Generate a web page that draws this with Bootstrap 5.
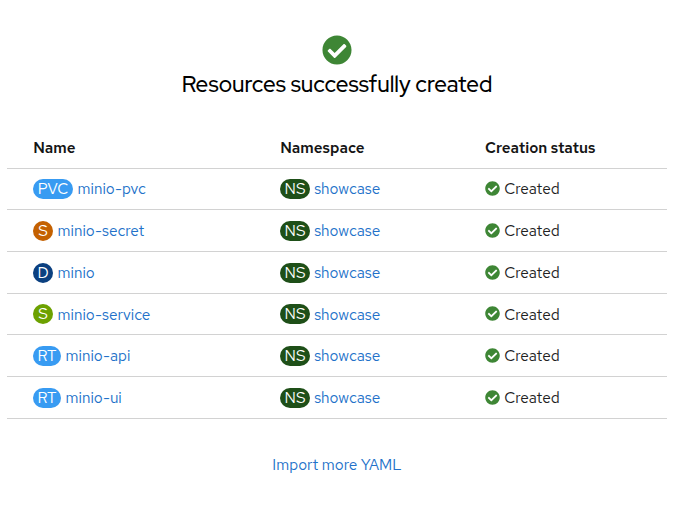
<!DOCTYPE html>
<html lang="en">
<head>
<meta charset="utf-8">
<meta name="viewport" content="width=device-width, initial-scale=1">
<title>Resources successfully created</title>
<link href="https://cdn.jsdelivr.net/npm/bootstrap@5.3.0/dist/css/bootstrap.min.css" rel="stylesheet">
<style>
body{font-family:"Red Hat Text",Inter,"Liberation Sans",sans-serif;font-size:15.35px;line-height:22px;color:#222;background:#fff;overflow:hidden}
.page{width:660px;margin-left:7px;padding-top:35px}
.done-icon{width:30px;height:30px}
.title{font-family:"Red Hat Display",Inter,sans-serif;font-size:22.35px;line-height:30px;font-weight:500;color:#000;margin:4px 0 0}
.res-table{margin-top:27.5px}
.res-row{height:41.7px;border-bottom:1px solid #d2d2d2;padding:1.24px 0 0 26px;font-weight:400}
.res-head{height:42px;font-size:15.2px;font-weight:600;color:#151515;padding-top:1px}
.res-head span{margin-left:.3px}
.c-name{width:247px}.c-ns{width:205px}
a{color:#2271c9;text-decoration:none}
.kind{height:20px;line-height:20px;border-radius:20px;color:#fff;text-align:center;margin-right:4.6px;margin-top:.78px}
.k-s{width:20px}.k-rt{width:28px}.k-pvc{width:40px}.k-ns{width:30px;margin-right:4.2px;background:#1e4f18}
.blue{background:#389bf2}.orange{background:#c46100}.navy{background:#0b4080}.green{background:#6ca100}
.ok-icon{width:15px;height:15px;margin-right:4.2px;margin-top:-1.2px}
.more{margin-top:35px}
</style>
</head>
<body>
<svg class="d-none"><symbol id="ok" viewBox="0 0 512 512"><path fill="#3e8635" d="M504 256c0 136.967-111.033 248-248 248S8 392.967 8 256 119.033 8 256 8s248 111.033 248 248zM227.314 387.314l184-184c6.248-6.248 6.248-16.379 0-22.627l-22.627-22.627c-6.248-6.249-16.379-6.249-22.628 0L216 308.118l-70.059-70.059c-6.248-6.248-16.379-6.248-22.628 0l-22.627 22.627c-6.248 6.248-6.248 16.379 0 22.627l104 104c6.249 6.249 16.379 6.249 22.628.001z"/></symbol></svg>
<main class="page">
<header class="text-center">
<svg class="done-icon d-block mx-auto"><use href="#ok"/></svg>
<h1 class="title">Resources successfully created</h1>
</header>
<section class="res-table" role="table">
<div class="res-row res-head d-flex align-items-center" role="row"><div class="c-name"><span>Name</span></div><div class="c-ns"><span>Namespace</span></div><div>Creation status</div></div>
<div class="res-row d-flex align-items-center" role="row"><div class="c-name d-flex"><span class="kind k-pvc blue">PVC</span><a href="#">minio-pvc</a></div><div class="c-ns d-flex"><span class="kind k-ns">NS</span><a href="#">showcase</a></div><div class="d-flex align-items-center"><svg class="ok-icon"><use href="#ok"/></svg><span>Created</span></div></div>
<div class="res-row d-flex align-items-center" role="row"><div class="c-name d-flex"><span class="kind k-s orange">S</span><a href="#">minio-secret</a></div><div class="c-ns d-flex"><span class="kind k-ns">NS</span><a href="#">showcase</a></div><div class="d-flex align-items-center"><svg class="ok-icon"><use href="#ok"/></svg><span>Created</span></div></div>
<div class="res-row d-flex align-items-center" role="row"><div class="c-name d-flex"><span class="kind k-s navy">D</span><a href="#">minio</a></div><div class="c-ns d-flex"><span class="kind k-ns">NS</span><a href="#">showcase</a></div><div class="d-flex align-items-center"><svg class="ok-icon"><use href="#ok"/></svg><span>Created</span></div></div>
<div class="res-row d-flex align-items-center" role="row"><div class="c-name d-flex"><span class="kind k-s green">S</span><a href="#">minio-service</a></div><div class="c-ns d-flex"><span class="kind k-ns">NS</span><a href="#">showcase</a></div><div class="d-flex align-items-center"><svg class="ok-icon"><use href="#ok"/></svg><span>Created</span></div></div>
<div class="res-row d-flex align-items-center" role="row"><div class="c-name d-flex"><span class="kind k-rt blue">RT</span><a href="#">minio-api</a></div><div class="c-ns d-flex"><span class="kind k-ns">NS</span><a href="#">showcase</a></div><div class="d-flex align-items-center"><svg class="ok-icon"><use href="#ok"/></svg><span>Created</span></div></div>
<div class="res-row d-flex align-items-center" role="row"><div class="c-name d-flex"><span class="kind k-rt blue">RT</span><a href="#">minio-ui</a></div><div class="c-ns d-flex"><span class="kind k-ns">NS</span><a href="#">showcase</a></div><div class="d-flex align-items-center"><svg class="ok-icon"><use href="#ok"/></svg><span>Created</span></div></div>
</section>
<footer class="more text-center"><a href="#">Import more YAML</a></footer>
</main>
<script src="https://cdn.jsdelivr.net/npm/bootstrap@5.3.0/dist/js/bootstrap.bundle.min.js"></script>
</body>
</html>
